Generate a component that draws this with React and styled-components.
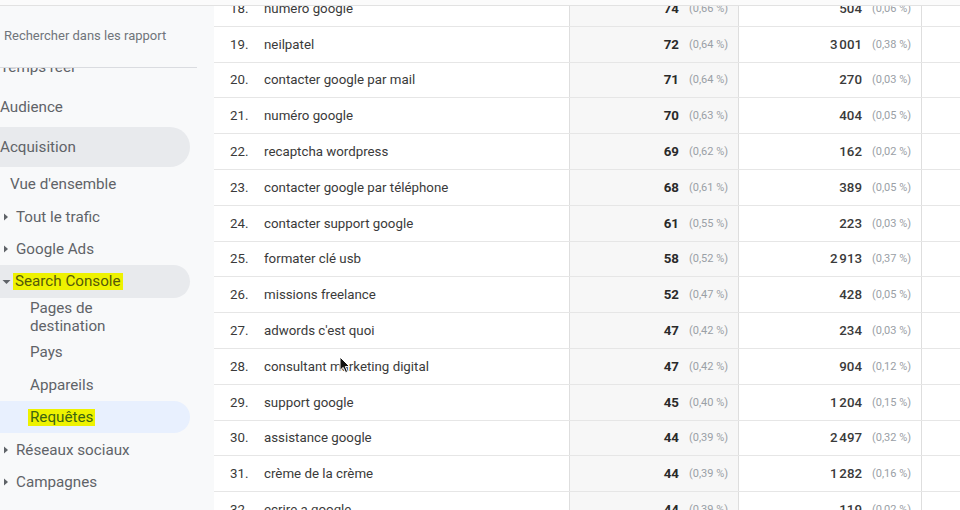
import React from "react";
import styled, { createGlobalStyle } from "styled-components";

const Global = createGlobalStyle`
  html, body { margin: 0; padding: 0; background: #ffffff; }
  body { font-family: Roboto, "Noto Sans", "Liberation Sans", sans-serif; }
  * { box-sizing: border-box; }
`;

const Page = styled.div`
  position: relative;
  width: 960px;
  height: 510px;
  overflow: hidden;
  display: flex;
  flex-direction: column;
  background: #ffffff;
`;

const TopStrip = styled.div`
  height: 6px;
  flex: none;
  background: #fbfbfb;
  border-bottom: 1px solid #e2e2e2;
  position: relative;
  z-index: 3;
`;

const Body = styled.div`
  flex: 1;
  display: flex;
  min-height: 0;
`;

const Sidebar = styled.aside`
  width: 214px;
  flex: none;
  background: #f8f9fa;
  display: flex;
  flex-direction: column;
  overflow: hidden;
`;

const SearchBox = styled.div`
  height: 62px;
  flex: none;
  width: 197px;
  display: flex;
  align-items: center;
  padding: 0 0 2px 4px;
  border-bottom: 1px solid #dadce0;
  font-size: 13px;
  color: #70757a;
  background: #f8f9fa;
  position: relative;
  z-index: 2;
  white-space: nowrap;
`;

const NavList = styled.div`
  display: flex;
  flex-direction: column;
  margin-top: -21px;
`;

const NavItem = styled.div`
  height: ${(p) => p.$h || 32}px;
  width: 190px;
  display: flex;
  align-items: center;
  padding-left: ${(p) => p.$indent || 0}px;
  font-size: 15.2px;
  color: #5f6368;
  border-radius: 0 20px 20px 0;
  background: ${(p) =>
    p.$active === "grey" ? "#e8eaed" : p.$active === "blue" ? "#e8f0fe" : "transparent"};
  line-height: 18px;
  flex: none;
  white-space: nowrap;
`;

const Caret = styled.span`
  width: 13px;
  flex: none;
  display: inline-flex;
  align-items: center;
  margin-left: ${(p) => p.$ml || 3}px;
`;

const Mark = styled.span`
  background: #eef200;
  color: ${(p) => p.$color || "#55590a"};
  padding: 0 2px;
  margin-left: -2px;
  line-height: 17px;
`;

const Table = styled.div`
  flex: 1;
  overflow: hidden;
  display: flex;
  flex-direction: column;
`;

const Rows = styled.div`
  margin-top: -15px;
  display: flex;
  flex-direction: column;
`;

const Row = styled.div`
  display: grid;
  grid-template-columns: 356px 169px 183px 1fr;
  height: 35.8px;
  flex: none;
  border-bottom: 1px solid #e6e6e6;
`;

const KeyCell = styled.div`
  display: flex;
  align-items: center;
  padding-left: 16px;
  border-right: 1px solid #dedede;
  font-size: 13.3px;
  color: #3a3a3a;
  white-space: nowrap;
`;

const Index = styled.span`
  width: 34px;
  flex: none;
`;

const MetricCell = styled.div`
  display: flex;
  align-items: center;
  justify-content: flex-end;
  gap: 10px;
  padding-right: 8px;
  border-right: 1px solid #dedede;
  background: ${(p) => (p.$sorted ? "#f7f7f7" : "#ffffff")};
`;

const Value = styled.span`
  font-size: 13.3px;
  font-weight: ${(p) => (p.$bold ? 700 : 500)};
  color: ${(p) => (p.$bold ? "#2a2a2a" : "#3a3a3a")};
`;

const Pct = styled.span`
  font-size: 11px;
  color: #9aa0a6;
  width: 41px;
  text-align: left;
  white-space: nowrap;
`;

const EmptyCell = styled.div``;

const Cursor = styled.svg`
  position: absolute;
  left: 339px;
  top: 356px;
  z-index: 5;
`;

const TriRight = () => (
  <svg width="6" height="8" viewBox="0 0 6 8">
    <path d="M1 0.5 L5 4 L1 7.5 Z" fill="#5f6368" />
  </svg>
);
const TriDown = () => (
  <svg width="9" height="6" viewBox="0 0 9 6">
    <path d="M0.5 1 L8.5 1 L4.5 5 Z" fill="#5f6368" />
  </svg>
);

const rows = [
  [18, "numero google", "74", "(0,66 %)", "504", "(0,06 %)"],
  [19, "neilpatel", "72", "(0,64 %)", "3\u202F001", "(0,38 %)"],
  [20, "contacter google par mail", "71", "(0,64 %)", "270", "(0,03 %)"],
  [21, "numéro google", "70", "(0,63 %)", "404", "(0,05 %)"],
  [22, "recaptcha wordpress", "69", "(0,62 %)", "162", "(0,02 %)"],
  [23, "contacter google par téléphone", "68", "(0,61 %)", "389", "(0,05 %)"],
  [24, "contacter support google", "61", "(0,55 %)", "223", "(0,03 %)"],
  [25, "formater clé usb", "58", "(0,52 %)", "2\u202F913", "(0,37 %)"],
  [26, "missions freelance", "52", "(0,47 %)", "428", "(0,05 %)"],
  [27, "adwords c'est quoi", "47", "(0,42 %)", "234", "(0,03 %)"],
  [28, "consultant marketing digital", "47", "(0,42 %)", "904", "(0,12 %)"],
  [29, "support google", "45", "(0,40 %)", "1\u202F204", "(0,15 %)"],
  [30, "assistance google", "44", "(0,39 %)", "2\u202F497", "(0,32 %)"],
  [31, "crème de la crème", "44", "(0,39 %)", "1\u202F282", "(0,16 %)"],
  [32, "ecrire a google", "44", "(0,39 %)", "119", "(0,02 %)"],
];

export default function App() {
  return (
    <Page>
      <Global />
      <TopStrip />
      <Body>
        <Sidebar>
          <SearchBox>Rechercher dans les rapport</SearchBox>
          <NavList>
            <NavItem $h={40}>Temps réel</NavItem>
            <NavItem $h={40}>Audience</NavItem>
            <NavItem $h={40} $active="grey">Acquisition</NavItem>
            <NavItem $h={34} $indent={10}>Vue d'ensemble</NavItem>
            <NavItem>
              <Caret><TriRight /></Caret>Tout le trafic
            </NavItem>
            <NavItem>
              <Caret><TriRight /></Caret>Google Ads
            </NavItem>
            <NavItem $h={33} $active="grey">
              <Caret $ml={2}><TriDown /></Caret>
              <Mark>Search Console</Mark>
            </NavItem>
            <NavItem $h={38} $indent={30}>
              Pages de
              <br />
              destination
            </NavItem>
            <NavItem $indent={30}>Pays</NavItem>
            <NavItem $h={33} $indent={30}>Appareils</NavItem>
            <NavItem $active="blue" $indent={30}>
              <Mark $color="#3d6412">Requêtes</Mark>
            </NavItem>
            <NavItem $h={33}>
              <Caret><TriRight /></Caret>Réseaux sociaux
            </NavItem>
            <NavItem>
              <Caret><TriRight /></Caret>Campagnes
            </NavItem>
          </NavList>
        </Sidebar>
        <Table>
          <Rows>
            {rows.map(([n, q, v1, p1, v2, p2]) => (
              <Row key={n}>
                <KeyCell>
                  <Index>{n}.</Index>
                  {q}
                </KeyCell>
                <MetricCell $sorted>
                  <Value $bold>{v1}</Value>
                  <Pct>{p1}</Pct>
                </MetricCell>
                <MetricCell>
                  <Value>{v2}</Value>
                  <Pct>{p2}</Pct>
                </MetricCell>
                <EmptyCell />
              </Row>
            ))}
          </Rows>
        </Table>
      </Body>
      <Cursor width="12" height="18" viewBox="0 0 12 18">
        <path
          d="M1 1 L1 14.5 L4.2 11.4 L6.6 16.6 L8.6 15.7 L6.3 10.6 L10.6 10.6 Z"
          fill="#111"
          stroke="#fff"
          strokeWidth="1"
          strokeLinejoin="round"
        />
      </Cursor>
    </Page>
  );
}
